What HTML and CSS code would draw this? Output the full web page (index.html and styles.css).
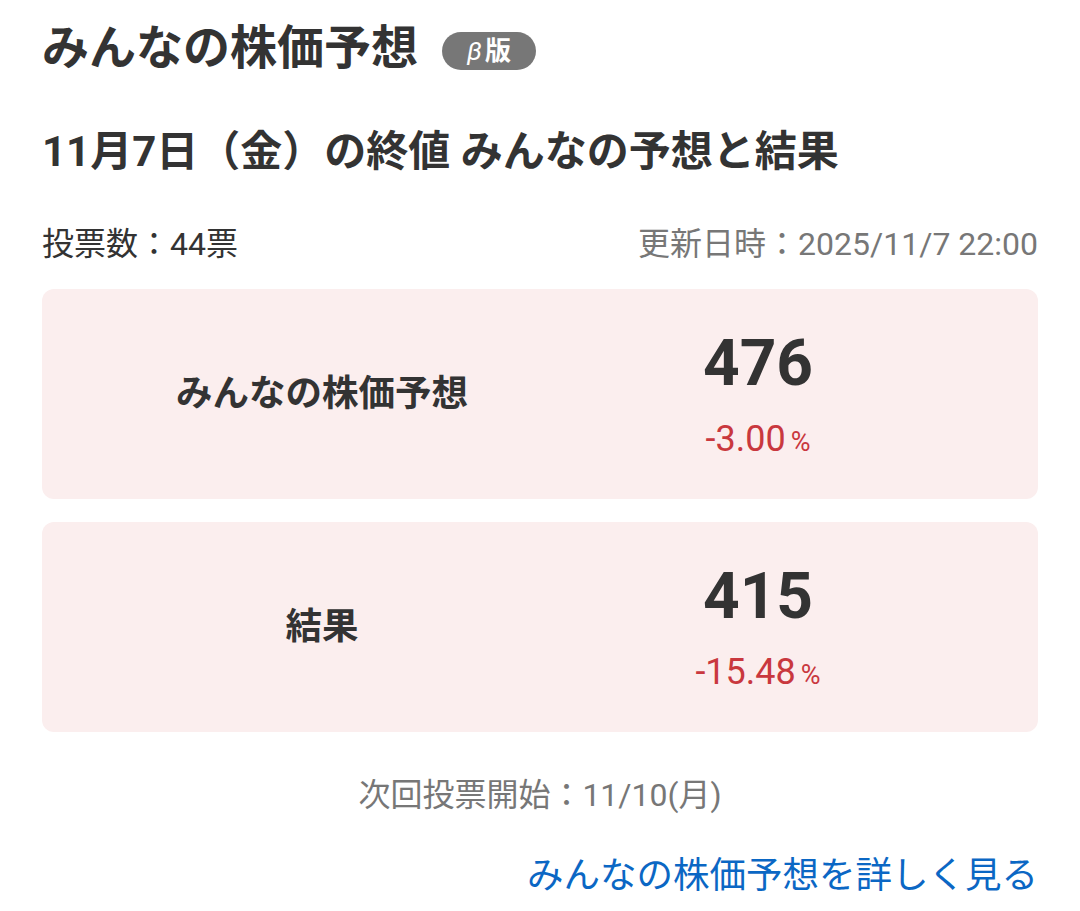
FILE: index.html
```html
<!DOCTYPE html>
<html lang="ja">
<head>
    <meta charset="utf-8">
    <meta name="viewport" content="width=device-width, initial-scale=1">
    <title>みんなの株価予想</title>
    <link rel="stylesheet" href="styles.css">
</head>
<body>
<div class="yoso">
    <h1 class="yoso-title">みんなの株価予想<span class="beta"><i>β</i>版</span></h1>

    <h2 class="yoso-sub">11月7日（金）の終値 みんなの予想と結果</h2>

    <div class="meta">
        <span class="votes">投票数：44票</span>
        <span class="updated">更新日時：2025/11/7 22:00</span>
    </div>

    <div class="card">
        <div class="card-label">みんなの株価予想</div>
        <div class="card-value">
            <div class="price">476</div>
            <div class="rate">-3.00<span class="pct">%</span></div>
        </div>
    </div>

    <div class="card">
        <div class="card-label">結果</div>
        <div class="card-value">
            <div class="price">415</div>
            <div class="rate">-15.48<span class="pct">%</span></div>
        </div>
    </div>

    <p class="next">次回投票開始：11/10(月)</p>

    <div class="more">
        <a href="#">みんなの株価予想を詳しく見る</a>
    </div>
</div>
</body>
</html>
```

FILE: styles.css
```css
body {
    margin: 0;
    background: #FFFFFF;
    color: #333333;
    font-family: Roboto, "Noto Sans CJK JP", sans-serif;
}

.yoso {
    padding: 13px 42px 0;
}

.yoso-title {
    margin: 0;
    font-size: 47px;
    line-height: 70px;
    font-weight: bold;
    display: flex;
    align-items: center;
}

.beta {
    display: inline-block;
    margin: 6px 0 0 24px;
    width: 94px;
    height: 38px;
    line-height: 38px;
    border-radius: 19px;
    background: #777777;
    color: #FFFFFF;
    text-align: center;
    font-size: 26px;
    font-weight: bold;
}

.beta i {
    margin-right: 3px;
    font-weight: normal;
}

.yoso-sub {
    margin: 37px 0 0;
    font-size: 42px;
    line-height: 63px;
    font-weight: bold;
}

.meta {
    margin-top: 37px;
    display: flex;
    justify-content: space-between;
    font-size: 32px;
    line-height: 48px;
}

.updated {
    color: #777777;
}

.card {
    margin-top: 21px;
    padding: 33px 62px;
    display: grid;
    grid-template-columns: 1fr 1fr;
    align-items: center;
    background: #FBEEEE;
    border-radius: 12px;
}

.card + .card {
    margin-top: 23px;
}

.card-label {
    text-align: center;
    font-size: 36.5px;
    line-height: 54px;
    font-weight: bold;
}

.card-value {
    text-align: center;
}

.price {
    font-size: 64px;
    line-height: 84px;
    font-weight: bold;
}

.rate {
    margin-top: 9px;
    font-size: 36px;
    line-height: 48px;
    color: #C9383E;
}

.pct {
    margin-left: 5px;
    font-size: 27px;
}

.next {
    margin: 39px 0 0;
    text-align: center;
    font-size: 32px;
    line-height: 48px;
    color: #777777;
}

.more {
    margin-top: 30px;
    text-align: right;
    font-size: 36.5px;
    line-height: 54px;
}

.more a {
    color: #0B67C4;
    text-decoration: none;
}
```
